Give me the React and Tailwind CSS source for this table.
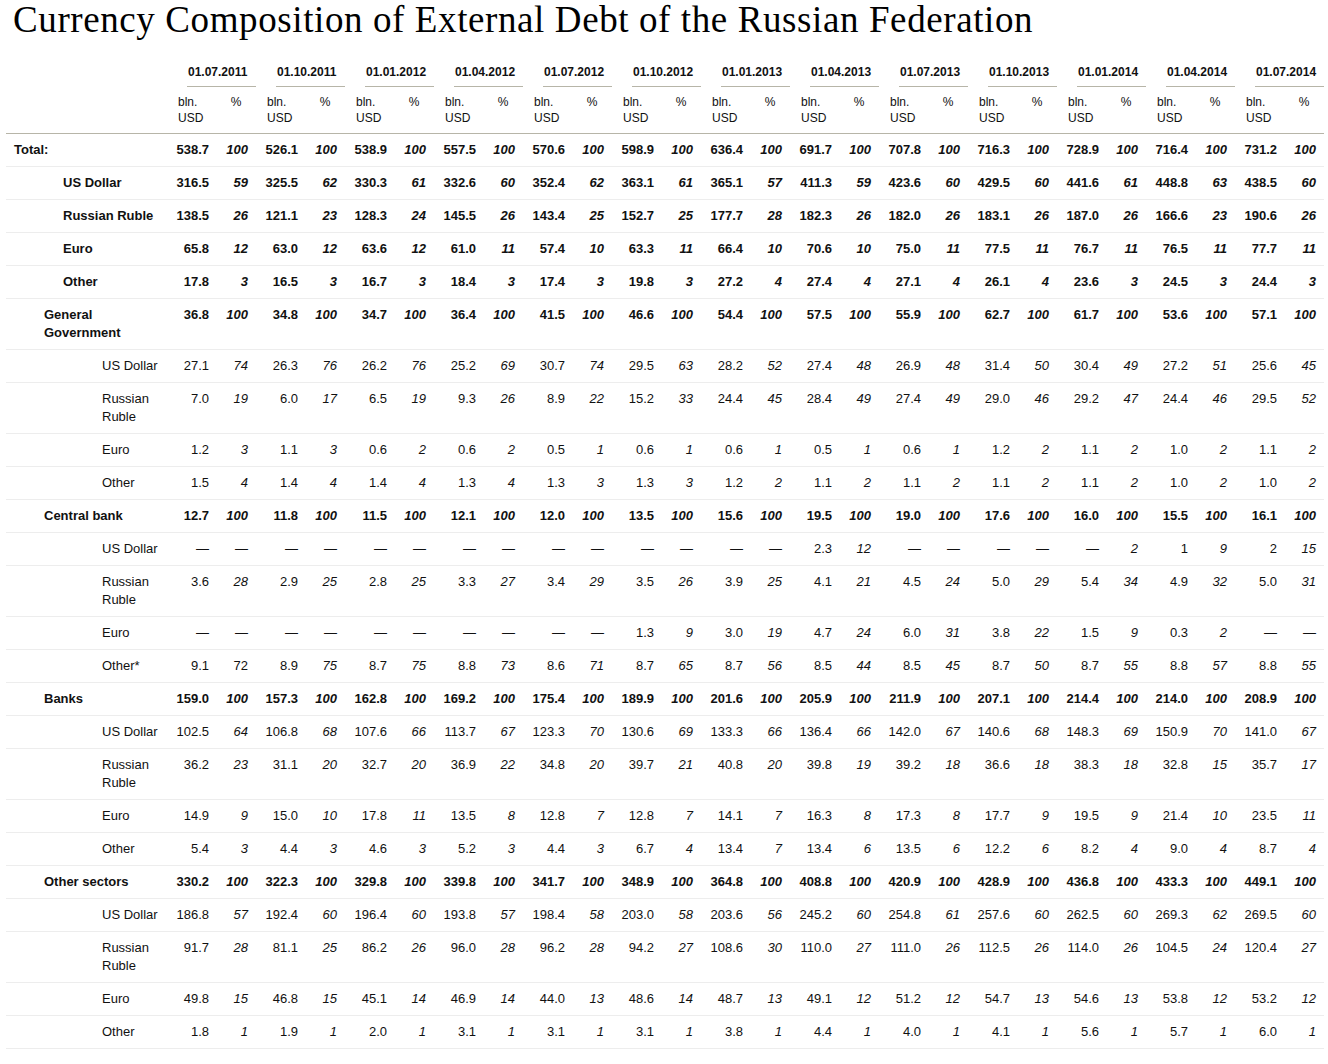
import React from "react";

const dates = [
  "01.07.2011", "01.10.2011", "01.01.2012", "01.04.2012", "01.07.2012", "01.10.2012", "01.01.2013",
  "01.04.2013", "01.07.2013", "01.10.2013", "01.01.2014", "01.04.2014", "01.07.2014",
];

// level: 0 = total, 1 = currency of total, 2 = sector, 3 = currency of sector
const rows = [
  { label: "Total:", level: 0, v: "538.7 100|526.1 100|538.9 100|557.5 100|570.6 100|598.9 100|636.4 100|691.7 100|707.8 100|716.3 100|728.9 100|716.4 100|731.2 100" },
  { label: "US Dollar", level: 1, v: "316.5 59|325.5 62|330.3 61|332.6 60|352.4 62|363.1 61|365.1 57|411.3 59|423.6 60|429.5 60|441.6 61|448.8 63|438.5 60" },
  { label: "Russian Ruble", level: 1, v: "138.5 26|121.1 23|128.3 24|145.5 26|143.4 25|152.7 25|177.7 28|182.3 26|182.0 26|183.1 26|187.0 26|166.6 23|190.6 26" },
  { label: "Euro", level: 1, v: "65.8 12|63.0 12|63.6 12|61.0 11|57.4 10|63.3 11|66.4 10|70.6 10|75.0 11|77.5 11|76.7 11|76.5 11|77.7 11" },
  { label: "Other", level: 1, v: "17.8 3|16.5 3|16.7 3|18.4 3|17.4 3|19.8 3|27.2 4|27.4 4|27.1 4|26.1 4|23.6 3|24.5 3|24.4 3" },

  { label: "General Government", level: 2, v: "36.8 100|34.8 100|34.7 100|36.4 100|41.5 100|46.6 100|54.4 100|57.5 100|55.9 100|62.7 100|61.7 100|53.6 100|57.1 100" },
  { label: "US Dollar", level: 3, v: "27.1 74|26.3 76|26.2 76|25.2 69|30.7 74|29.5 63|28.2 52|27.4 48|26.9 48|31.4 50|30.4 49|27.2 51|25.6 45" },
  { label: "Russian Ruble", level: 3, v: "7.0 19|6.0 17|6.5 19|9.3 26|8.9 22|15.2 33|24.4 45|28.4 49|27.4 49|29.0 46|29.2 47|24.4 46|29.5 52" },
  { label: "Euro", level: 3, v: "1.2 3|1.1 3|0.6 2|0.6 2|0.5 1|0.6 1|0.6 1|0.5 1|0.6 1|1.2 2|1.1 2|1.0 2|1.1 2" },
  { label: "Other", level: 3, v: "1.5 4|1.4 4|1.4 4|1.3 4|1.3 3|1.3 3|1.2 2|1.1 2|1.1 2|1.1 2|1.1 2|1.0 2|1.0 2" },

  { label: "Central bank", level: 2, v: "12.7 100|11.8 100|11.5 100|12.1 100|12.0 100|13.5 100|15.6 100|19.5 100|19.0 100|17.6 100|16.0 100|15.5 100|16.1 100" },
  { label: "US Dollar", level: 3, v: "— —|— —|— —|— —|— —|— —|— —|2.3 12|— —|— —|— 2|1 9|2 15" },
  { label: "Russian Ruble", level: 3, v: "3.6 28|2.9 25|2.8 25|3.3 27|3.4 29|3.5 26|3.9 25|4.1 21|4.5 24|5.0 29|5.4 34|4.9 32|5.0 31" },
  { label: "Euro", level: 3, v: "— —|— —|— —|— —|— —|1.3 9|3.0 19|4.7 24|6.0 31|3.8 22|1.5 9|0.3 2|— —" },
  { label: "Other*", level: 3, upright: 0, v: "9.1 72|8.9 75|8.7 75|8.8 73|8.6 71|8.7 65|8.7 56|8.5 44|8.5 45|8.7 50|8.7 55|8.8 57|8.8 55" },

  { label: "Banks", level: 2, v: "159.0 100|157.3 100|162.8 100|169.2 100|175.4 100|189.9 100|201.6 100|205.9 100|211.9 100|207.1 100|214.4 100|214.0 100|208.9 100" },
  { label: "US Dollar", level: 3, v: "102.5 64|106.8 68|107.6 66|113.7 67|123.3 70|130.6 69|133.3 66|136.4 66|142.0 67|140.6 68|148.3 69|150.9 70|141.0 67" },
  { label: "Russian Ruble", level: 3, v: "36.2 23|31.1 20|32.7 20|36.9 22|34.8 20|39.7 21|40.8 20|39.8 19|39.2 18|36.6 18|38.3 18|32.8 15|35.7 17" },
  { label: "Euro", level: 3, v: "14.9 9|15.0 10|17.8 11|13.5 8|12.8 7|12.8 7|14.1 7|16.3 8|17.3 8|17.7 9|19.5 9|21.4 10|23.5 11" },
  { label: "Other", level: 3, v: "5.4 3|4.4 3|4.6 3|5.2 3|4.4 3|6.7 4|13.4 7|13.4 6|13.5 6|12.2 6|8.2 4|9.0 4|8.7 4" },

  { label: "Other sectors", level: 2, v: "330.2 100|322.3 100|329.8 100|339.8 100|341.7 100|348.9 100|364.8 100|408.8 100|420.9 100|428.9 100|436.8 100|433.3 100|449.1 100" },
  { label: "US Dollar", level: 3, v: "186.8 57|192.4 60|196.4 60|193.8 57|198.4 58|203.0 58|203.6 56|245.2 60|254.8 61|257.6 60|262.5 60|269.3 62|269.5 60" },
  { label: "Russian Ruble", level: 3, v: "91.7 28|81.1 25|86.2 26|96.0 28|96.2 28|94.2 27|108.6 30|110.0 27|111.0 26|112.5 26|114.0 26|104.5 24|120.4 27" },
  { label: "Euro", level: 3, v: "49.8 15|46.8 15|45.1 14|46.9 14|44.0 13|48.6 14|48.7 13|49.1 12|51.2 12|54.7 13|54.6 13|53.8 12|53.2 12" },
  { label: "Other", level: 3, v: "1.8 1|1.9 1|2.0 1|3.1 1|3.1 1|3.1 1|3.8 1|4.4 1|4.0 1|4.1 1|5.6 1|5.7 1|6.0 1" },
];

const indent = ["pl-[8px]", "pl-[57px]", "pl-[38px]", "pl-[96px]"];

function Row({ row }) {
  const bold = row.level < 3;
  const cells = row.v.split("|").map((p) => p.split(" "));
  return (
    <tr className={`border-b border-[#ededed] align-top ${bold ? "font-bold" : ""}`}>
      <td className={`pt-[7px] pb-[7px] pr-[8px] text-left ${indent[row.level]}`}>{row.label}</td>
      {cells.map(([amount, pct], i) => (
        <React.Fragment key={i}>
          <td className="pt-[7px] pb-[7px] pr-[7px] text-right">{amount}</td>
          <td className={`pt-[7px] pb-[7px] pr-[8px] text-right ${row.upright === i ? "" : "italic"}`}>{pct}</td>
        </React.Fragment>
      ))}
    </tr>
  );
}

export default function App() {
  return (
    <div className="bg-white min-h-screen text-[#111]">
      <h1 className="pl-[13px] text-[37px] leading-[40px] tracking-[0.6px] font-normal text-black font-['Liberation_Serif',serif]">
        Currency Composition of External Debt of the Russian Federation
      </h1>

      <table className="ml-[6px] mt-[16px] w-[1318px] table-fixed border-collapse text-[13px] leading-[18px] font-['Liberation_Sans',Arial,sans-serif]">
        <colgroup>
          <col className="w-[161px]" />
          {dates.map((d) => (
            <React.Fragment key={d}>
              <col className="w-[49px]" />
              <col className="w-[40px]" />
            </React.Fragment>
          ))}
        </colgroup>
        <thead className="text-[12px] leading-[16px]">
          <tr>
            <th></th>
            {dates.map((d) => (
              <th key={d} colSpan={2} className="pl-[20px] pr-0 p-0 font-bold">
                <div className="border-b border-[#b7b5a8] pt-[8px] pb-[6px] pl-px text-left">{d}</div>
              </th>
            ))}
          </tr>
          <tr className="border-b border-[#b7b5a8] align-top">
            <th></th>
            {dates.map((d) => (
              <React.Fragment key={d}>
                <th className="pl-[11px] pt-[7px] pb-[7px] text-left font-normal">
                  bln.
                  <br />
                  USD
                </th>
                <th className="pt-[7px] pb-[7px] text-center font-normal">%</th>
              </React.Fragment>
            ))}
          </tr>
        </thead>
        <tbody>
          {rows.map((r, i) => (
            <Row key={i} row={r} />
          ))}
        </tbody>
      </table>
    </div>
  );
}
